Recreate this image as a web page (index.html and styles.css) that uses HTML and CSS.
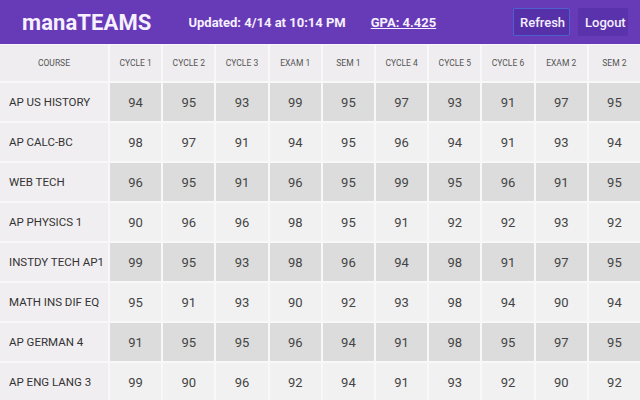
FILE: index.html
```html
<!DOCTYPE html>
<html>
<head>
<meta charset="utf-8">
<link rel="stylesheet" href="styles.css">
</head>
<body>
<header class="topbar">
  <div class="brand">manaTEAMS</div>
  <div class="updated">Updated: 4/14 at 10:14 PM</div>
  <a class="gpa">GPA: 4.425</a>
  <div class="actions">
    <button class="btn btn-refresh">Refresh</button>
    <button class="btn btn-logout">Logout</button>
  </div>
</header>
<main class="grid">
  <div class="hcell">COURSE</div>
  <div class="hcell">CYCLE 1</div>
  <div class="hcell">CYCLE 2</div>
  <div class="hcell">CYCLE 3</div>
  <div class="hcell">EXAM 1</div>
  <div class="hcell">SEM 1</div>
  <div class="hcell">CYCLE 4</div>
  <div class="hcell">CYCLE 5</div>
  <div class="hcell">CYCLE 6</div>
  <div class="hcell">EXAM 2</div>
  <div class="hcell">SEM 2</div>

  <div class="course">AP US HISTORY</div>
  <div class="g dark">94</div><div class="g dark">95</div><div class="g dark">93</div><div class="g dark">99</div><div class="g dark">95</div><div class="g dark">97</div><div class="g dark">93</div><div class="g dark">91</div><div class="g dark">97</div><div class="g dark">95</div>

  <div class="course">AP CALC-BC</div>
  <div class="g">98</div><div class="g">97</div><div class="g">91</div><div class="g">94</div><div class="g">95</div><div class="g">96</div><div class="g">94</div><div class="g">91</div><div class="g">93</div><div class="g">94</div>

  <div class="course">WEB TECH</div>
  <div class="g dark">96</div><div class="g dark">95</div><div class="g dark">91</div><div class="g dark">96</div><div class="g dark">95</div><div class="g dark">99</div><div class="g dark">95</div><div class="g dark">96</div><div class="g dark">91</div><div class="g dark">95</div>

  <div class="course">AP PHYSICS 1</div>
  <div class="g">90</div><div class="g">96</div><div class="g">96</div><div class="g">98</div><div class="g">95</div><div class="g">91</div><div class="g">92</div><div class="g">92</div><div class="g">93</div><div class="g">92</div>

  <div class="course">INSTDY TECH AP1</div>
  <div class="g dark">99</div><div class="g dark">95</div><div class="g dark">93</div><div class="g dark">98</div><div class="g dark">96</div><div class="g dark">94</div><div class="g dark">98</div><div class="g dark">91</div><div class="g dark">97</div><div class="g dark">95</div>

  <div class="course">MATH INS DIF EQ</div>
  <div class="g">95</div><div class="g">91</div><div class="g">93</div><div class="g">90</div><div class="g">92</div><div class="g">93</div><div class="g">98</div><div class="g">94</div><div class="g">90</div><div class="g">94</div>

  <div class="course">AP GERMAN 4</div>
  <div class="g dark">91</div><div class="g dark">95</div><div class="g dark">95</div><div class="g dark">96</div><div class="g dark">94</div><div class="g dark">91</div><div class="g dark">98</div><div class="g dark">95</div><div class="g dark">97</div><div class="g dark">95</div>

  <div class="course">AP ENG LANG 3</div>
  <div class="g">99</div><div class="g">90</div><div class="g">96</div><div class="g">92</div><div class="g">94</div><div class="g">91</div><div class="g">93</div><div class="g">92</div><div class="g">90</div><div class="g">92</div>
</main>
</body>
</html>
```
FILE: styles.css
```css
html, body {
  margin: 0;
  padding: 0;
  background: #f9f8f9;
  font-family: Roboto, "Liberation Sans", sans-serif;
  overflow: hidden;
}
.topbar {
  height: 44px;
  background: #673ab7;
  display: flex;
  align-items: center;
  color: #fff;
  box-sizing: border-box;
  padding: 0 12px 0 22px;
}
.brand {
  font-size: 22px;
  font-weight: 700;
  letter-spacing: 0.1px;
  color: #f6f0ff;
}
.updated {
  margin-left: 37px;
  font-size: 13px;
  font-weight: 700;
  color: #f6f0ff;
}
.gpa {
  margin-left: 25px;
  font-size: 13px;
  font-weight: 700;
  text-decoration: underline;
  color: #f6f0ff;
}
.actions {
  margin-left: auto;
  display: flex;
  gap: 8px;
}
.btn {
  font-family: Roboto, "Liberation Sans", sans-serif;
  font-size: 13px;
  font-weight: 500;
  color: #f4eeff;
  border-radius: 2px;
  height: 28px;
  padding: 0 6px;
  cursor: pointer;
}
.btn-refresh {
  background: #5530a8;
  border: 1px solid #4e5fd0;
  width: 57px;
}
.btn-logout {
  background: #5a32ab;
  border: 1px solid #5a32ab;
  width: 50px;
}
.grid {
  display: grid;
  grid-template-columns: 108px repeat(10, 1fr);
  grid-template-rows: 36px repeat(8, 38px);
  gap: 2px;
  padding-top: 1px;
  width: 640px;
}
.hcell {
  background: #efedef;
  font-size: 8.5px;
  color: #555;
  display: flex;
  align-items: center;
  justify-content: center;
}
.course {
  background: #f0eef0;
  font-size: 11.5px;
  color: #333;
  display: flex;
  align-items: center;
  padding-left: 9px;
  white-space: nowrap;
}
.g {
  background: #f2f1f2;
  font-size: 13px;
  color: #444;
  display: flex;
  align-items: center;
  justify-content: center;
}
.g.dark {
  background: #dcdcdc;
}
```
